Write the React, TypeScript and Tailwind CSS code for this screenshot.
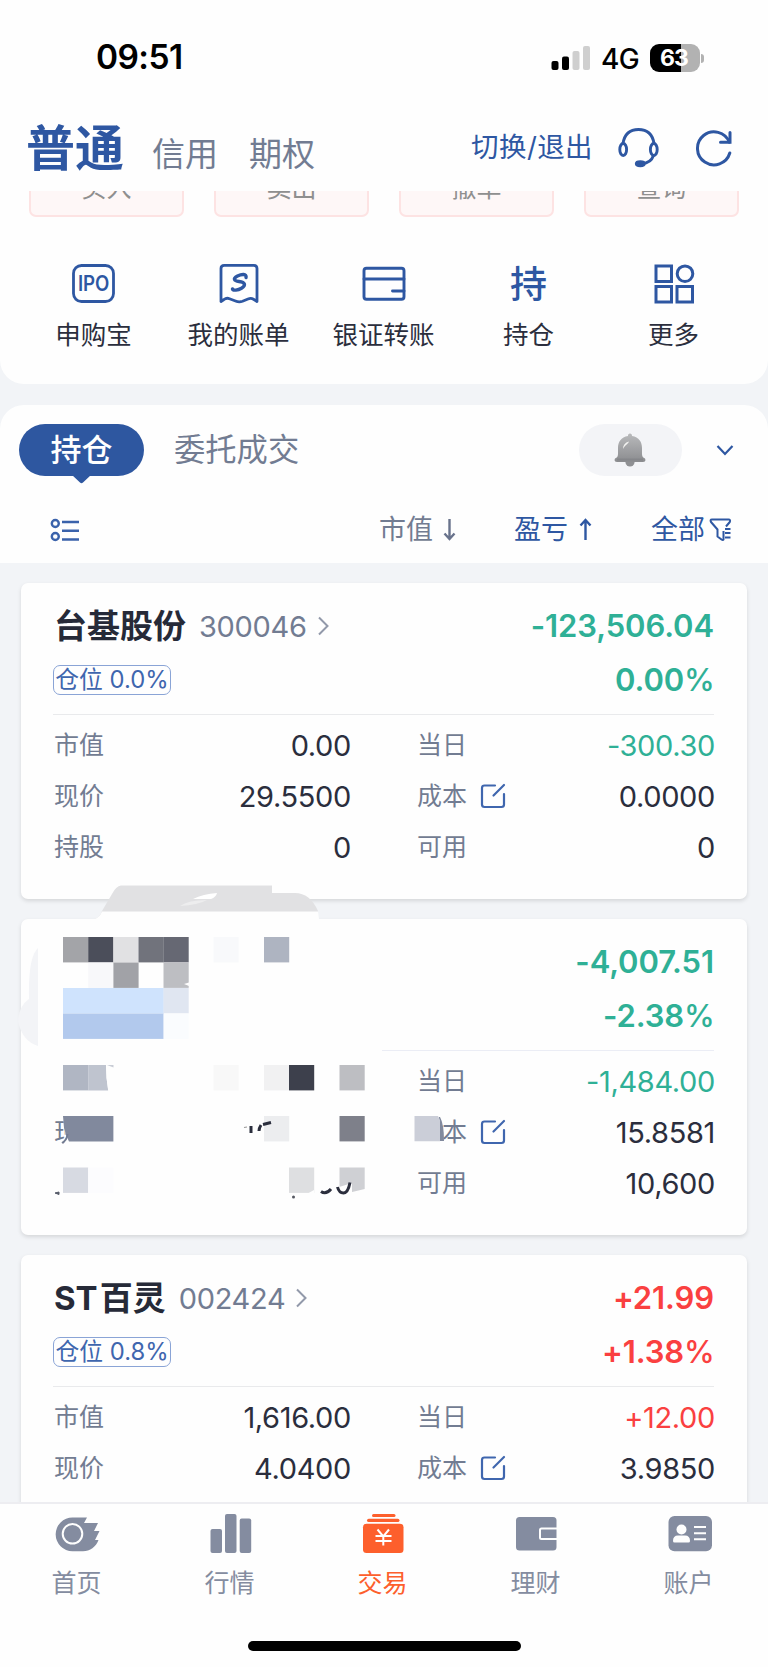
import React from "react";

const BLUE = "#2e57a2";

type Tone = "up" | "down" | "plain";

const toneClass: Record<Tone, string> = {
  up: "text-[#fa4040]",
  down: "text-[#2fb096]",
  plain: "text-[#2b2e3d]",
};

function StatusBar() {
  return (
    <div className="flex h-[108px] items-start justify-between pt-[40px] pl-[96px] pr-[64px] text-black">
      <span className="text-[33.500px] leading-[34px] font-semibold tracking-[-0.6px]">09:51</span>
      <div className="flex items-center pt-[3px]">
        <svg className="h-[28px] w-[40px]" viewBox="0 0 40 28">
          <rect x="0.5" y="17" width="7" height="9" rx="2" />
          <rect x="11" y="12.500" width="7" height="13.500" rx="2" />
          <rect x="21.500" y="7" width="7" height="19" rx="2" fill="#cfcfcf" />
          <rect x="32" y="2" width="7" height="24" rx="2" fill="#cfcfcf" />
        </svg>
        <span className="mt-[2px] ml-[10px] w-[39px] text-[28px] leading-[28px] font-medium tracking-[-0.7px]">4G</span>
        <div className="relative ml-[10px] flex h-[28px] w-[50px] items-center justify-center overflow-hidden rounded-[9px] bg-[linear-gradient(90deg,#000_62%,#b2b2b2_62%)]">
          <span className="pr-[2px] text-[23px] leading-none font-bold tracking-[-0.8px] text-white">63</span>
        </div>
        <div className="ml-[1px] h-[9px] w-[3px] rounded-r-full bg-[#b2b2b2]" />
      </div>
    </div>
  );
}

function Header() {
  return (
    <div className="flex h-[83px] items-start justify-between pl-[26px] pr-[34px]">
      <div className="flex items-baseline pt-[16px] text-[#727c92]">
        <span className="text-[49px] leading-[50px] font-bold text-[#2e57a2]">普通</span>
        <span className="ml-[28px] text-[33px] leading-none">信用</span>
        <span className="ml-[31px] text-[33px] leading-none">期权</span>
      </div>
      <div className="flex h-[80px] items-center">
        <span className="text-[27.500px] leading-none tracking-[0.4px] text-[#2e57a2]">切换/退出</span>
        <svg className="ml-[25px] h-[42px] w-[42px]" viewBox="0 0 42 42" fill="none" stroke={BLUE} strokeWidth="2.900" strokeLinecap="round">
          <path d="M5 16.500C6.500 7 12.500 2.500 20.500 2.500S34.500 7 36 16.500" />
          <ellipse cx="5.200" cy="22.500" rx="3.400" ry="6" />
          <ellipse cx="35.800" cy="22.500" rx="3.400" ry="6" />
          <path d="M35.500 28.500C34 33 30 36.200 24 36.800" />
          <ellipse cx="22.300" cy="36.800" rx="4" ry="2" fill={BLUE} />
        </svg>
        <svg className="ml-[34px] h-[40px] w-[40px]" viewBox="0 0 40 40" fill="none" stroke={BLUE} strokeWidth="3" strokeLinecap="round">
          <path d="M35.300 14.200A16.500 16.500 0 1 0 35.800 25" />
          <path d="M36 4.500V14.200H26.500" />
        </svg>
      </div>
    </div>
  );
}

function ActionButtons() {
  return (
    <div className="flex h-[26px] items-end justify-between overflow-hidden px-[29px]">
      {["买入", "卖出", "撤单", "查询"].map((t) => (
        <div
          key={t}
          className="flex h-[56px] w-[155px] shrink-0 items-center justify-center rounded-[7px] border-2 border-[#fde3e3] bg-[#fef7f7] pb-[2px] text-[25px] leading-none text-[#8f8f8f]"
        >
          <span>{t}</span>
        </div>
      ))}
    </div>
  );
}

function IpoIcon() {
  return (
    <svg className="h-[42px] w-[44px]" viewBox="0 0 44 42">
      <rect x="1.500" y="2.500" width="40" height="36" rx="8" fill="none" stroke={BLUE} strokeWidth="2.800" />
      <text x="21.700" y="28.300" textAnchor="middle" fontSize="21.500" fontWeight="600" fill={BLUE} textLength="31.500" lengthAdjust="spacingAndGlyphs">
        IPO
      </text>
    </svg>
  );
}

function BillIcon() {
  return (
    <svg className="h-[42px] w-[44px]" viewBox="0 0 44 42">
      <path d="M4 38.500V5.500Q4 2.300 7.200 2.300H36.800Q40 2.300 40 5.500V38.500L36.500 36.300Q34 34.700 31 36L25.500 38.300Q22 39.500 18.500 38L12.500 35.700Q9.500 34.500 7 36.500Z" fill="none" stroke={BLUE} strokeWidth="2.800" strokeLinejoin="round" />
      <path d="M29 14.500C30 10.500 24.500 11 20.500 13C15.500 15.500 17 18 22 18.500C28.500 19.200 29 22.500 24.500 25.200C21 27.200 16 28 15.500 26" fill="none" stroke={BLUE} strokeWidth="3.400" strokeLinecap="round" strokeLinejoin="round" />
    </svg>
  );
}

function TransferIcon() {
  return (
    <svg className="h-[42px] w-[44px]" viewBox="0 0 44 42" fill="none" stroke={BLUE} strokeWidth="2.900" strokeLinecap="round">
      <rect x="2" y="5.300" width="40" height="31" rx="2.500" />
      <path d="M2 16H42M30.500 28H42" />
    </svg>
  );
}

function HoldIcon() {
  return <span className="flex h-[42px] items-center text-[37px] leading-none font-medium text-[#2e57a2]">持</span>;
}

function MoreIcon() {
  return (
    <svg className="h-[42px] w-[44px]" viewBox="0 0 44 42" fill="none" stroke={BLUE} strokeWidth="3">
      <rect x="4" y="3" width="15.500" height="15.500" />
      <circle cx="33" cy="10.700" r="7.800" />
      <rect x="4" y="23.500" width="15.500" height="15.500" />
      <rect x="25" y="23.500" width="15.500" height="15.500" />
    </svg>
  );
}

const shortcuts = [
  { label: "申购宝", Icon: IpoIcon },
  { label: "我的账单", Icon: BillIcon },
  { label: "银证转账", Icon: TransferIcon },
  { label: "持仓", Icon: HoldIcon },
  { label: "更多", Icon: MoreIcon },
];

function Shortcuts() {
  return (
    <div className="grid h-[167px] w-[746px] grid-cols-5 pl-[21px] pt-[46px]">
      {shortcuts.map(({ label, Icon }) => (
        <div key={label} className="flex flex-col items-center">
          <Icon />
          <span className="mt-[16px] text-[25.500px] leading-[28px] text-[#2b2e3d]">{label}</span>
        </div>
      ))}
    </div>
  );
}

function BellIcon() {
  return (
    <svg className="mr-[2px] h-[34px] w-[32px]" viewBox="0 0 32 34">
      <defs>
        <linearGradient id="bell" x1="0" y1="0" x2="0" y2="1">
          <stop offset="0" stopColor="#b9babc" />
          <stop offset="1" stopColor="#8b8c8f" />
        </linearGradient>
      </defs>
      <ellipse cx="16" cy="29.500" rx="4.500" ry="4" fill="#8f9093" />
      <path d="M16 .5C17.500.5 18 1.500 18 3C25 4 28 9 28 15V21Q28 24.500 31 25.500Q32.500 29 29 29H3Q-.5 29 1 25.500Q4 24.500 4 21V15C4 9 7 4 14 3C14 1.500 14.500.5 16 .5Z" fill="url(#bell)" />
      <path d="M3 26.500H29" stroke="#85868a" strokeWidth="2" />
      <path d="M9 16C9 12 11 9.500 15 8.500C14 11 11 12 9 16Z" fill="#f3f3f1" />
    </svg>
  );
}

function PositionTabs() {
  return (
    <div className="flex h-[158px] flex-col rounded-t-[24px] bg-[#fefefe]">
      <div className="flex h-[90px] items-start pt-[19px] pl-[19px]">
        <div className="flex w-[125px] flex-col items-center">
          <div className="flex h-[52px] w-[125px] items-center justify-center rounded-full bg-[#2e57a0] text-[31px] leading-none font-medium text-white">
            持仓
          </div>
          <svg className="-mt-px h-[9px] w-[19px]" viewBox="0 0 19 9">
            <path d="M0 0H19L11 7.500Q9.500 9 8 7.500Z" fill="#2e57a0" />
          </svg>
        </div>
        <span className="ml-[30px] flex h-[52px] items-center pt-[2px] text-[31.300px] leading-none text-[#727c92]">委托成交</span>
        <div className="ml-auto flex h-[52px] w-[103px] items-center justify-center rounded-full bg-[#f3f4f7]">
          <BellIcon />
        </div>
        <svg className="mt-[18px] mr-[34px] ml-[34px] h-[16px] w-[18px]" viewBox="0 0 18 16">
          <path d="M1.500 4L9 12L16.500 4" fill="none" stroke={BLUE} strokeWidth="2.200" />
        </svg>
      </div>
      <div className="flex h-[68px] items-start pt-[21px] pl-[50px] text-[27px] leading-none">
        <svg className="mt-[2px] h-[26px] w-[30px]" viewBox="0 0 30 26" fill="none" stroke="#3a62ab" strokeWidth="2.400">
          <circle cx="5.300" cy="5.500" r="3.500" />
          <circle cx="5.300" cy="18.500" r="3.500" />
          <path d="M12 4H29M12 12.700H29M12 21.500H29" />
        </svg>
        <span className="ml-[299px] text-[#727c92]">市值</span>
        <svg className="mt-[2px] ml-[10px] h-[23px] w-[13px]" viewBox="0 0 13 23" fill="none" stroke="#69738c" strokeWidth="2.400">
          <path d="M6.500 1V21M1.500 15.500L6.500 21L11.500 15.500" />
        </svg>
        <span className="ml-[58px] text-[#2e57a2]">盈亏</span>
        <svg className="mt-[2px] ml-[11px] h-[23px] w-[13px]" viewBox="0 0 13 23" fill="none" stroke={BLUE} strokeWidth="2.400">
          <path d="M6.500 22V2M1.500 7.500L6.500 2L11.500 7.500" />
        </svg>
        <span className="ml-[59px] text-[#2e57a2]">全部</span>
        <svg className="mt-[1px] ml-[4px] h-[25px] w-[23px]" viewBox="0 0 23 25" fill="none" stroke={BLUE} strokeWidth="2">
          <path d="M14.500 14V22.500Q14 23.500 12.500 22.500L8.500 19.500V12.500L2 5Q.8 2.500 3 2.500H19.500Q21.800 2.500 20.800 5L17 9.500" strokeLinejoin="round" />
          <path d="M16 12H21.500M16 16H21.500M16 20.500H21.500" />
        </svg>
      </div>
    </div>
  );
}

function EditIcon() {
  return (
    <svg className="ml-[13px] h-[26px] w-[26px] -translate-y-px" viewBox="0 0 26 26" fill="none" stroke="#3f66ae" strokeWidth="2.200" strokeLinecap="round">
      <path d="M15 2.500H4.500Q2 2.500 2 5V21.500Q2 24 4.500 24H21.500Q24 24 24 21.500V11" />
      <path d="M13.500 12.500L24 2" />
    </svg>
  );
}

function Cell({ label, value, tone = "plain", edit = false }: { label: string; value: string; tone?: Tone; edit?: boolean }) {
  return (
    <div className="flex h-[51px] items-center">
      <span className="text-[25px] leading-none text-[#727c92]">{label}</span>
      {edit && <EditIcon />}
      <span className={`ml-auto pb-[1px] text-[29px] leading-none tracking-[-0.35px] ${toneClass[tone]}`}>{value}</span>
    </div>
  );
}

function Percent({ text, tone }: { text: string; tone: Tone }) {
  return (
    <span className={`ml-auto pb-[1px] text-[31px] leading-none font-semibold tracking-[-0.1px] ${toneClass[tone]}`}>
      {text.replace("%", "")}
      <span className="font-medium tracking-[-0.9px]">%</span>
    </span>
  );
}

function StockName({ name }: { name: string }) {
  const latin = name.match(/^[A-Z]+/)?.[0] ?? "";
  return (
    <span className="ml-[1px] text-[33px] leading-none font-bold text-[#262a38]">
      {latin && <span className="mr-[2px]">{latin}</span>}
      {name.slice(latin.length)}
    </span>
  );
}

interface Holding {
  name: string;
  code: string;
  ratio: string;
  profit: string;
  percent: string;
  tone: Tone;
  left: [string, string][];
  right: [string, string][];
}

function HoldingCard({ item, masked = false }: { item: Holding; masked?: boolean }) {
  return (
    <div className="relative h-[316px] shrink-0 rounded-[7px] bg-[#fefefe] pt-[16px] pr-[33px] pl-[32px] shadow-[0_2px_4px_rgba(0,0,0,0.12)]">
      <div className="flex h-[54px] items-center">
        {!masked && (
          <>
            <StockName name={item.name} />
            <span className="ml-[13px] text-[29px] leading-none tracking-[-0.3px] text-[#727c92]">{item.code}</span>
            <svg className="ml-[10px] h-[20px] w-[13px]" viewBox="0 0 13 20">
              <path d="M2 1.500L10.500 10L2 18.500" fill="none" stroke="#9299aa" strokeWidth="2" />
            </svg>
          </>
        )}
        <span className={`ml-auto pb-[2px] text-[31px] leading-none font-semibold tracking-[-0.1px] ${toneClass[item.tone]}`}>{item.profit}</span>
      </div>
      <div className="flex h-[54px] items-center">
        {!masked && (
          <span className="flex h-[30px] w-[118px] items-center justify-center rounded-[7px] border border-[#8aa4d6] text-[23.800px] leading-none whitespace-nowrap text-[#3f66ae]">
            {item.ratio}
          </span>
        )}
        <Percent text={item.percent} tone={item.tone} />
      </div>
      <div className={masked ? "mt-[7px] ml-[329px] h-px bg-[#ebedf5]" : "mt-[7px] h-px bg-[#e9eaec]"} />
      <div className="mt-[5px] -mr-px grid grid-cols-[297px_298px] justify-between pl-px">
        <div>
          {!masked && item.left.map(([l, v]) => <Cell key={l} label={l} value={v} />)}
          {masked && (
            <div className="mt-[51px] flex h-[51px] items-center overflow-hidden text-[25px] leading-none text-[#727c92]">现</div>
          )}
        </div>
        <div>
          {item.right.map(([l, v], i) => (
            <Cell key={l} label={l} value={v} tone={i === 0 ? item.tone : "plain"} edit={i === 1} />
          ))}
        </div>
      </div>
      {masked && <MaskOverlay />}
    </div>
  );
}

const C = 25.2;
const tiles: [number, number, number, number, string][] = [
  [63, 937, 1, 1, "#a3a4a8"],
  [88.2, 937, 1, 1, "#4b4e5a"],
  [113.400, 937, 1, 1, "#e1e1e3"],
  [138.500, 937, 1, 1, "#71737c"],
  [163.500, 937, 1, 1, "#666873"],
  [213.500, 937, 1, 1, "#f8f9fb"],
  [264, 937, 1, 1, "#aeb4c1"],
  [88.2, 962.500, 1, 1, "#f8f8fa"],
  [113.400, 962.500, 1, 1, "#a1a2a7"],
  [163.500, 962.500, 1, 1, "#bdbec2"],
  [63, 988, 4, 1, "#cfe3fd"],
  [163.500, 988, 1, 1, "#e0e6f1"],
  [63, 1013.500, 4, 1, "#b2c9ed"],
  [163.500, 1013.500, 1, 1, "#fafcfe"],
  [63, 1065, 1, 1, "#b0b6c3"],
  [213.500, 1065, 1, 1, "#f8f8f8"],
  [264, 1065, 1, 1, "#f1f1f2"],
  [289, 1065, 1, 1, "#3d404c"],
  [339.500, 1065, 1, 1, "#bdbec2"],
  [264, 1116, 1, 1, "#ecedef"],
  [339.500, 1116, 1, 1, "#7e808a"],
  [63, 1167.500, 1, 1, "#d7dae2"],
  [88.2, 1167.500, 1, 1, "#fcfcfe"],
  [289, 1167.500, 1, 1, "#dedfe1"],
];

/* Redaction brush and mosaic drawn over the private fields of a holding. */
function MaskOverlay() {
  return (
    <svg className="pointer-events-none absolute top-[-39px] left-[-21px] h-[350px] w-[480px]" viewBox="0 880 480 350">
      <path d="M95 919Q100 917 102 911L112 894Q116 886 121 885.500H272V893H295Q310 893 318 911V919Z" fill="#e1e1e3" />
      <path d="M95 919Q100 917 102 911.500H318L319 919V921H95Z" fill="#fefefe" />
      <path d="M193 899Q203 894 217 893Q216 897 211 899Z" fill="#fff" />
      <path d="M180 906Q188 900 207 900Q198 905 180 906Z" fill="#ededee" />
      <path d="M38 948Q28 957 29 999Q19 1006 18 1021Q22 1041 38 1046Z" fill="#f3f4f7" />
      {tiles.map(([x, y, w, h, c]) => (
        <rect key={`${x}-${y}`} x={x} y={y} width={C * w} height={25.400 * h} fill={c} />
      ))}
      <path d="M184 984L189 982.500V986Z" fill="#fefefe" />
      <path d="M88.2 1065H106Q106 1078 108.200 1090.400H88.2Z" fill="#bfc4cf" />
      <path d="M106 1065H113.500V1090.500H108.200Q106 1078 106 1065Z" fill="#fefefe" />
      <path d="M107 1065H113.500V1067.500Z" fill="#c9cdd6" />
      <path d="M63 1114H82V1146H63L66 1138Z" fill="#fefefe" />
      <path d="M63 1116H113.400V1141.500H69Q66 1136 64 1128Z" fill="#81899d" />
      <path d="M67.500 1134Q67 1140 62 1143" fill="none" stroke="#727c92" strokeWidth="2" />
      <path d="M55 1193L59 1192L59 1194.500Z" fill="#555a68" stroke="#555a68" />
      <path d="M251 1126V1133M259 1131Q259 1128 261 1125M263 1124.500L271 1122.500" fill="none" stroke="#2b2e3d" strokeWidth="3" />
      <path d="M244 1127.500L247 1127" stroke="#999" strokeWidth="1.200" />
      <path d="M339.500 1167.500H364.700V1189L339.500 1195Z" fill="#cfd0d4" />
      <path d="M305 1195L314 1190V1196H305Z" fill="#fefefe" />
      <path d="M321 1191.500Q326 1195 331 1189" fill="none" stroke="#2b2e3d" strokeWidth="3" />
      <path d="M336 1198V1188L352 1183V1198Z" fill="#fefefe" />
      <path d="M337.500 1187Q339 1193 343.500 1193T350 1182.500" fill="none" stroke="#2b2e3d" strokeWidth="3" />
      <circle cx="293.500" cy="1197" r="1.500" fill="#555861" />
      <rect x="412" y="1112" width="30" height="33" fill="#fefefe" />
      <path d="M440 1117Q444 1124 444 1141H439V1117Z" fill="#81899d" />
      <path d="M414.500 1116H438L440 1120V1141.300H414.500Z" fill="#cbced8" />
    </svg>
  );
}

const holdings: Holding[] = [
  {
    name: "台基股份",
    code: "300046",
    ratio: "仓位 0.0%",
    profit: "-123,506.04",
    percent: "0.00%",
    tone: "down",
    left: [["市值", "0.00"], ["现价", "29.5500"], ["持股", "0"]],
    right: [["当日", "-300.30"], ["成本", "0.0000"], ["可用", "0"]],
  },
  {
    name: "",
    code: "",
    ratio: "",
    profit: "-4,007.51",
    percent: "-2.38%",
    tone: "down",
    left: [],
    right: [["当日", "-1,484.00"], ["成本", "15.8581"], ["可用", "10,600"]],
  },
  {
    name: "ST百灵",
    code: "002424",
    ratio: "仓位 0.8%",
    profit: "+21.99",
    percent: "+1.38%",
    tone: "up",
    left: [["市值", "1,616.00"], ["现价", "4.0400"]],
    right: [["当日", "+12.00"], ["成本", "3.9850"]],
  },
];

const GREY = "#848ca0";

function HomeIcon() {
  return (
    <svg className="h-[42px] w-[46px]" viewBox="0 0 46 42">
      <path d="M18.500 4.500H33L30 10H44L40 18H45.500L41 27H44.500C42 34 36 38.200 29 38.200H18.500A16.800 16.800 0 0 1 18.500 4.500Z" fill={GREY} />
      <circle cx="18.500" cy="20.800" r="9.800" fill="none" stroke="#fefefe" strokeWidth="2" />
    </svg>
  );
}

function MarketIcon() {
  return (
    <svg className="h-[42px] w-[46px]" viewBox="0 0 46 42" fill={GREY}>
      <rect x="3.500" y="16" width="11.500" height="24" rx="2" />
      <rect x="18" y="1" width="11.500" height="39" rx="2" />
      <rect x="32.700" y="5.500" width="11.500" height="34.500" rx="2" />
    </svg>
  );
}

function TradeIcon() {
  return (
    <svg className="h-[42px] w-[46px]" viewBox="0 0 46 42" fill="#fd5f2c">
      <rect x="12" y="1" width="23.500" height="3" rx="1.500" />
      <rect x="7" y="5.700" width="32.500" height="3.400" rx="1.700" />
      <rect x="3" y="10.700" width="40.500" height="29.300" rx="3.500" />
      <path d="M17.500 16.500L23.300 23.500L29 16.500M23.300 23.500V32.500M15.500 23H31.500M15.500 28H31.500" fill="none" stroke="#fff" strokeWidth="2" />
    </svg>
  );
}

function WalletIcon() {
  return (
    <svg className="h-[42px] w-[46px]" viewBox="0 0 46 42">
      <rect x="3" y="4" width="40.500" height="33.500" rx="3.500" fill={GREY} />
      <path d="M44 15.500H28.500Q27 15.500 27 17V24.500Q27 26 28.500 26H44" fill="none" stroke="#fefefe" strokeWidth="2" />
    </svg>
  );
}

function AccountIcon() {
  return (
    <svg className="h-[42px] w-[46px]" viewBox="0 0 46 42">
      <rect x="2.500" y="3" width="43.500" height="35.300" rx="6" fill={GREY} />
      <circle cx="15.500" cy="16.500" r="5" fill="#fefefe" />
      <path d="M7 28Q7 22.500 12 22.500H19Q24 22.500 24 28Q24 29.500 22.500 29.500H8.500Q7 29.500 7 28Z" fill="#fefefe" />
      <path d="M28 14H40M28 20.200H40M28 26.200H40" stroke="#fefefe" strokeWidth="2" />
    </svg>
  );
}

const tabs = [
  { label: "首页", Icon: HomeIcon },
  { label: "行情", Icon: MarketIcon },
  { label: "交易", Icon: TradeIcon, active: true },
  { label: "理财", Icon: WalletIcon },
  { label: "账户", Icon: AccountIcon },
];

function TabBar() {
  return (
    <div className="flex h-[165px] shrink-0 flex-col border-t-2 border-[#ededf1] bg-[#fefefe]">
      <div className="grid w-[765px] grid-cols-5 pt-[9px]">
        {tabs.map(({ label, Icon, active }) => (
          <div key={label} className="flex flex-col items-center">
            <Icon />
            <span className={`mt-[14px] text-[25px] leading-[28px] ${active ? "text-[#fd5f2c]" : "text-[#848ca0]"}`}>{label}</span>
          </div>
        ))}
      </div>
      <div className="mx-auto mt-[44px] h-[10px] w-[273px] rounded-full bg-black" />
    </div>
  );
}

export default function App() {
  return (
    <div className="flex h-[1667px] w-[768px] flex-col overflow-hidden bg-[#f2f4f7] font-['Inter','Noto_Sans_CJK_SC',sans-serif]">
      <div className="h-[384px] shrink-0 rounded-b-[24px] bg-[#fefefe]">
        <StatusBar />
        <Header />
        <ActionButtons />
        <Shortcuts />
      </div>
      <div className="mt-[20.500px] shrink-0">
        <PositionTabs />
      </div>
      <div className="flex min-h-0 flex-1 flex-col gap-[20px] overflow-hidden px-[21px] pt-[20.500px]">
        {holdings.map((h, i) => (
          <HoldingCard key={i} item={h} masked={i === 1} />
        ))}
      </div>
      <TabBar />
    </div>
  );
}
